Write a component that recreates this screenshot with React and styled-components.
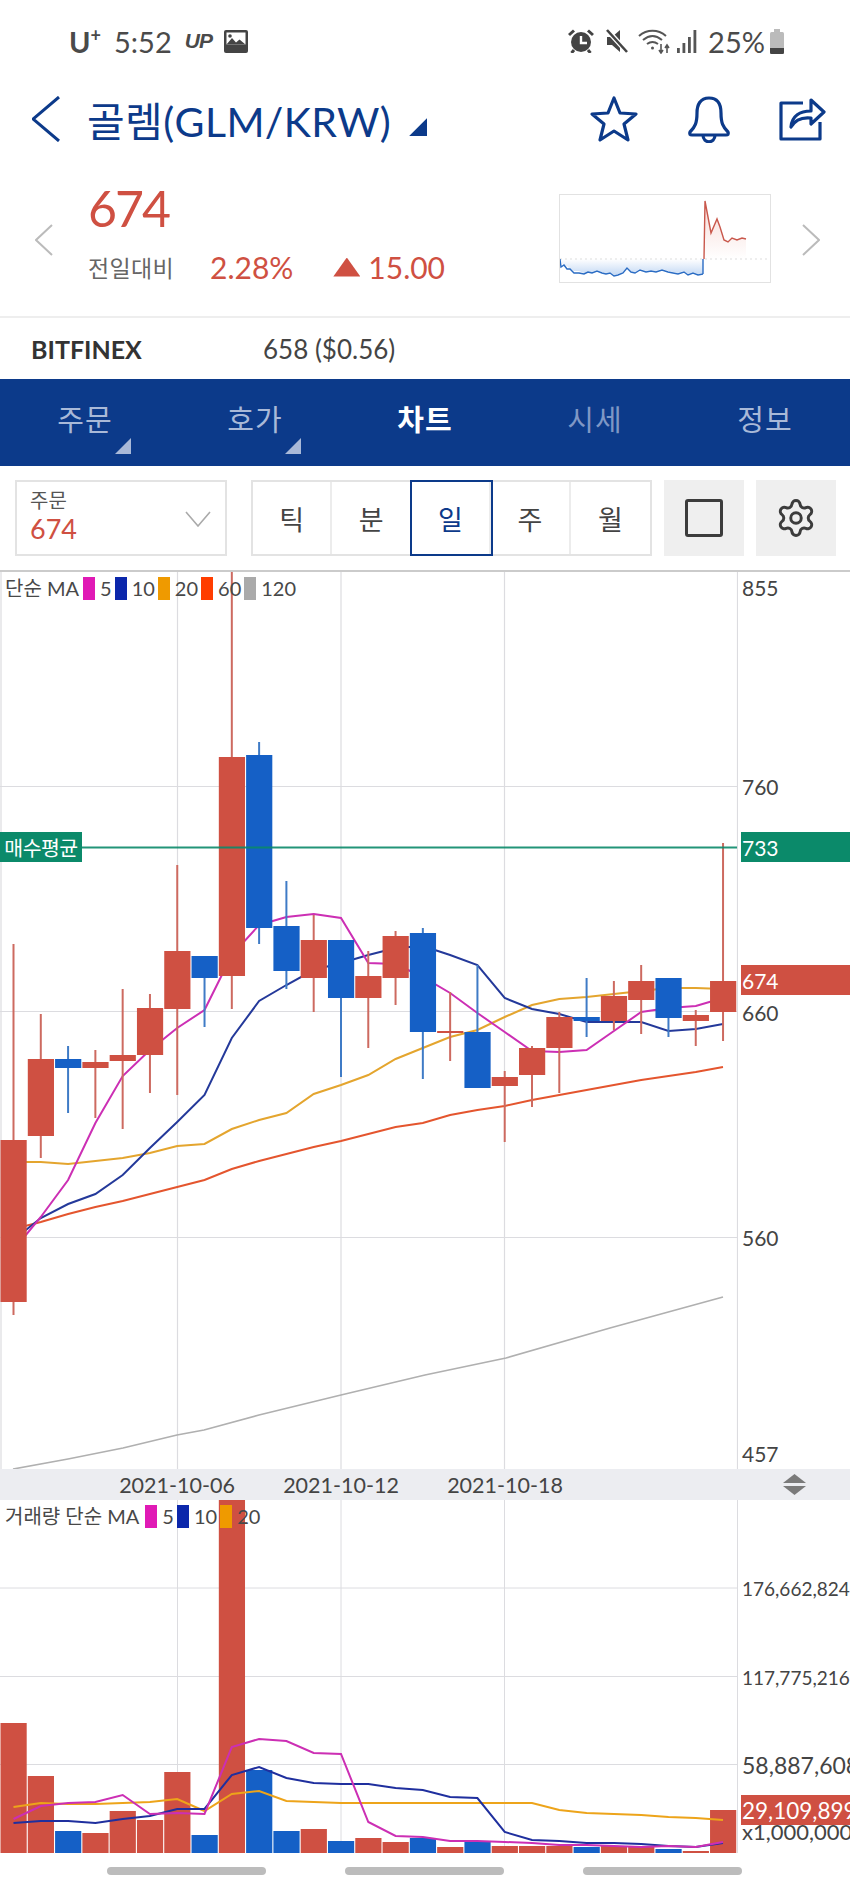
import React from "react";
import styled, { createGlobalStyle } from "styled-components";
import { Settings } from "lucide-react";

const NAVY = "#0c3a8a";
const RED = "#cf5042";
const BLUE = "#1560c6";
const GREEN = "#0b8a6a";
const INK = "#444";
const FONT = `"Lato","Noto Sans CJK KR",sans-serif`;

const Global = createGlobalStyle`
  html, body { margin: 0; padding: 0; background: #fff; }
  body { font-family: ${FONT}; color: ${INK}; }
`;

const Page = styled.div`
  width: 850px; height: 1889px; overflow: hidden; background: #fff;
  display: flex; flex-direction: column;
`;

const StatusBar = styled.div`
  height: 82px; flex: none; display: flex; align-items: center; justify-content: space-between;
  padding: 0 66px 0 69px; color: #4a4a4a; font-size: 29px;
`;
const StatusGroup = styled.div`
  display: flex; align-items: center;
`;
const StatusItem = styled.span`
  display: flex; align-items: center; margin-left: ${p => p.$ml || 0}px;
`;
const Carrier = styled.span` font-size: 29px; font-weight: 700; sup { font-size: 18px; line-height: 0; } `;
const UpMark = styled.span` font: italic 900 21px "Liberation Sans", sans-serif; letter-spacing: -1px; `;

const TitleBar = styled.div`
  height: 74px; flex: none; display: flex; align-items: center; padding: 0 24px 0 32px; color: ${NAVY};
`;
const Title = styled.h1`
  margin: 0 0 0 27px; font-size: 41px; font-weight: 400; white-space: nowrap; letter-spacing: 0.4px;
`;
const Caret = styled.i`
  width: 18px; height: 18px; margin: 16px 0 0 18px; background: ${NAVY};
  clip-path: polygon(100% 0, 100% 100%, 0 100%);
`;
const TitleActions = styled.div`
  margin-left: auto; display: flex; align-items: center; gap: 48px;
`;

const PriceSection = styled.section`
  height: 160px; flex: none; box-sizing: border-box; display: flex; padding: 32px 30px 0 35px;
`;
const PagerSlot = styled.div`
  flex: none; width: 18px; padding-top: 36px; color: #bbb;
`;
const PriceCol = styled.div`
  margin-left: 35px; width: 471px; flex: none; display: flex; flex-direction: column;
`;
const BigPrice = styled.div`
  color: ${RED}; font-size: 50px; line-height: 52px; letter-spacing: -2px; margin-top: -6px;
`;
const ChangeRow = styled.div`
  display: flex; align-items: center; margin-top: 18px; height: 30px; color: ${RED}; font-size: 30px;
`;
const ChangeLabel = styled.span` color: #666; font-size: 23px; width: 122px; letter-spacing: 0.3px; `;
const ChangeArrow = styled.i`
  width: 27px; height: 19px; margin: 0 8px 0 40px; background: ${RED};
  clip-path: polygon(50% 0, 100% 100%, 0 100%);
`;
const Spark = styled.div`
  flex: none; width: 212px; height: 89px; border: 1px solid #e2e2e2; box-sizing: border-box;
  margin-top: 6px; margin-right: 31px;
`;

const ExchangeRow = styled.div`
  height: 63px; flex: none; box-sizing: border-box; border-top: 2px solid #eee; display: flex; align-items: center;
  padding-left: 31px; font-size: 26px; color: #444;
`;
const ExchangeName = styled.span` width: 232px; font-weight: 700; color: #333; font-size: 25px; `;

const TabBar = styled.nav`
  height: 87px; flex: none; background: ${NAVY}; display: grid; grid-template-columns: repeat(5, 170px);
`;
const Tab = styled.div`
  position: relative; display: flex; align-items: center; justify-content: center;
  padding-bottom: 9px; font-size: 29px; letter-spacing: 1px;
  color: ${p => p.$active ? "#fff" : p.$dim ? "#7f97c5" : "#a9b9d8"};
  font-weight: ${p => p.$active ? 700 : 400};
`;
const TabCorner = styled.i`
  position: absolute; right: 39px; bottom: 12px; width: 16px; height: 16px; background: #a9b9d8;
  clip-path: polygon(100% 0, 100% 100%, 0 100%);
`;

const Controls = styled.div`
  height: 104px; flex: none; box-sizing: border-box; padding: 14px 14px 14px 15px;
  display: flex; align-items: flex-start;
`;
const Picker = styled.div`
  box-sizing: border-box; width: 212px; height: 76px; border: 2px solid #e3e3e3;
  padding: 5px 0 0 13px; position: relative; display: flex; flex-direction: column; gap: 2px;
`;
const PickerLabel = styled.span` font-size: 20px; line-height: 26px; color: #555; `;
const PickerValue = styled.span` font-size: 27px; line-height: 28px; color: ${RED}; `;
const PickerChevron = styled.svg` position: absolute; right: 14px; top: 29px; `;
const Segments = styled.div`
  box-sizing: border-box; margin-left: 24px; width: 401px; height: 76px; border: 2px solid #e3e3e3;
  display: grid; grid-template-columns: repeat(5, 1fr);
`;
const Segment = styled.div`
  display: flex; align-items: center; justify-content: center; font-size: 27px;
  border-right: 2px solid #ececec; color: ${p => p.$active ? NAVY : "#444"};
  position: relative;
  &:last-child { border-right: 0; }
  ${p => p.$active ? `box-shadow: 0 0 0 2px ${NAVY}; z-index: 1;` : ""}
`;
const ToolButton = styled.div`
  width: 80px; height: 76px; background: #efefef; margin-left: 12px;
  display: flex; align-items: center; justify-content: center; color: #3c3c3c;
`;
const SquareIcon = styled.i`
  width: 38px; height: 38px; box-sizing: border-box; border: 3px solid #3c3c3c; border-radius: 3px;
`;

const PriceChart = styled.div`
  height: 899px; flex: none; box-sizing: border-box; border-top: 2px solid #cbcbcb;
  display: grid; grid-template-columns: 738px 112px; position: relative;
`;
const VolumeChart = styled.div`
  height: 353px; flex: none; display: grid; grid-template-columns: 738px 112px; position: relative;
`;
const Plot = styled.svg` display: block; `;
const Axis = styled.div` position: relative; overflow: hidden; `;
const AxisLabel = styled.span`
  position: absolute; left: 4px; top: ${p => p.$y}px; transform: translateY(-50%);
  font-size: ${p => p.$size || 21}px; line-height: 1; color: #444; white-space: nowrap;
`;
const AxisTag = styled.span`
  position: absolute; left: 3px; right: 0; top: ${p => p.$y}px; height: ${p => p.$h || 30}px;
  background: ${p => p.$bg}; color: #fff; font-size: ${p => p.$size || 21}px;
  display: flex; align-items: center; padding-left: 1px; white-space: nowrap; overflow: hidden;
`;
const Legend = styled.div`
  position: absolute; left: 5px; top: ${p => p.$top}px; display: flex; align-items: center; gap: 3px;
  font-size: 20px; line-height: 23px; color: #484848; white-space: nowrap;
`;
const LegendName = styled.span` margin-right: ${p => p.$mr || 1}px; `;
const Swatch = styled.i`
  width: 12px; height: 23px; background: ${p => p.$color}; margin-right: 2px;
`;
const AvgTag = styled.div`
  position: absolute; left: 0; top: 260px; width: 82px; height: 30px; background: ${GREEN};
  color: #fff; font-size: 20.5px; display: flex; align-items: center; justify-content: center;
  white-space: nowrap; letter-spacing: -0.5px;
`;

const DateBar = styled.div`
  height: 31px; flex: none; background: #ecedf1; position: relative; font-size: 21.5px; color: #444;
`;
const DateLabel = styled.span`
  position: absolute; left: ${p => p.$x}px; top: 50%; transform: translate(-50%, -50%); white-space: nowrap;
`;
const Resizer = styled.svg` position: absolute; left: 783px; top: 5px; `;

const GestureBar = styled.div`
  flex: 1; display: flex; align-items: flex-start; padding: 14px 0 0 107px; gap: 79px;
`;
const Pill = styled.i` width: 159px; height: 8px; border-radius: 4px; background: #bcbcbc; `;

const X = i => 13.5 + 27.29 * i;
const pts = ys => ys.map((y, i) => `${X(i).toFixed(1)},${y}`).join(" ");

// kind, wick top, body top, body bottom, wick bottom
const CANDLES = [
  ["r", 944, 1140, 1302, 1315], ["r", 1014, 1059, 1136, 1158], ["b", 1046, 1059, 1068, 1113],
  ["r", 1050, 1062, 1068, 1118], ["r", 989, 1055, 1061, 1129], ["r", 994, 1008, 1055, 1093],
  ["r", 865, 951, 1009, 1095], ["b", 956, 956, 978, 1027], ["r", 572, 757, 976, 1009],
  ["b", 742, 755, 928, 944], ["b", 881, 926, 971, 989], ["r", 915, 940, 978, 1012],
  ["b", 940, 940, 998, 1077], ["r", 951, 976, 998, 1048], ["r", 931, 936, 978, 1005],
  ["b", 928, 933, 1032, 1079], ["r", 992, 1031, 1033, 1061], ["b", 965, 1032, 1088, 1088],
  ["r", 1071, 1077, 1086, 1142], ["r", 1046, 1048, 1075, 1107], ["r", 1012, 1017, 1048, 1093],
  ["b", 978, 1017, 1021, 1037], ["r", 981, 996, 1021, 1030], ["r", 965, 981, 1000, 1034],
  ["b", 978, 978, 1018, 1037], ["r", 1010, 1015, 1021, 1046], ["r", 843, 981, 1012, 1041],
];

const MA5 = [1250,1217,1180,1123,1076,1050,1028,1010,955,925,917,914,918,963,964,977,993,1013,1032,1051,1052,1050,1031,1012,1008,1006,998];
const MA10 = [1240,1218,1204,1194,1175,1148,1122,1095,1038,1001,985,970,963,955,948,946,955,965,998,1009,1014,1022,1022,1022,1031,1029,1024];
const MA20 = [1162,1162,1164,1161,1158,1153,1146,1144,1129,1120,1113,1094,1085,1075,1059,1048,1037,1030,1017,1005,999,997,994,991,988,988,989];
const MA60 = [1229,1222,1214,1207,1201,1194,1187,1180,1169,1161,1154,1147,1141,1134,1127,1123,1115,1110,1106,1100,1095,1090,1085,1080,1076,1072,1067];
const MA120 = "13,1469 68,1459 123,1448 177,1435 204,1430 259,1415 341,1395 425,1375 506,1358 610,1328 723,1297";

const VOL = [
  ["r",1723],["r",1776],["b",1831],["r",1833],["r",1811],["r",1820],["r",1772],["b",1835],["r",1500],
  ["b",1770],["b",1831],["r",1829],["b",1841],["r",1838],["r",1842],["b",1838],["r",1847],["b",1842],
  ["r",1846],["r",1846],["r",1846],["b",1847],["r",1846],["r",1846],["b",1849],["r",1851],["r",1810],
];
const V5 = [1819,1806,1803,1802,1795,1814,1813,1814,1747,1739,1741,1753,1754,1822,1836,1837,1841,1841,1842,1843,1845,1845,1846,1847,1846,1847,1842];
const V10 = [1823,1821,1821,1823,1819,1816,1809,1809,1775,1767,1778,1783,1784,1784,1788,1790,1797,1798,1832,1840,1841,1843,1843,1844,1846,1847,1843];
const V20 = [1807,1803,1804,1804,1803,1802,1799,1811,1794,1791,1801,1802,1803,1803,1803,1803,1803,1803,1803,1803,1810,1813,1814,1815,1817,1818,1820];

const GRID = "#dcdce0";

const Candle = ({ c, i }) => {
  const [k, wt, bt, bb, wb] = c;
  const x = X(i);
  return (
    <g>
      <line x1={x} x2={x} y1={wt} y2={wb} stroke={k === "r" ? "#cd6a60" : "#3f7bc6"} strokeWidth="2" />
      <rect x={x - 13} y={bt} width="26.2" height={bb - bt} fill={k === "r" ? RED : BLUE} />
    </g>
  );
};

const PricePlot = () => (
  <Plot width="738" height="897" viewBox="0 572 738 897">
    <g stroke={GRID} strokeWidth="1.2">
      <line x1="1" x2="1" y1="572" y2="1469" />
      <line x1="0" x2="737" y1="786.5" y2="786.5" />
      <line x1="0" x2="737" y1="1011.5" y2="1011.5" />
      <line x1="0" x2="737" y1="1237.5" y2="1237.5" />
      <line x1="177.5" x2="177.5" y1="572" y2="1469" />
      <line x1="341" x2="341" y1="572" y2="1469" />
      <line x1="504.5" x2="504.5" y1="572" y2="1469" />
      <line x1="737.5" x2="737.5" y1="572" y2="1469" />
    </g>
    <polyline points={MA120} fill="none" stroke="#b0b0b0" strokeWidth="1.7" />
    <polyline points={pts(MA60)} fill="none" stroke="#e4552e" strokeWidth="2" />
    <polyline points={pts(MA20)} fill="none" stroke="#e4a52e" strokeWidth="2" />
    <polyline points={pts(MA10)} fill="none" stroke="#24399a" strokeWidth="2" />
    <polyline points={pts(MA5)} fill="none" stroke="#cc2fb4" strokeWidth="2" />
    {CANDLES.map((c, i) => <Candle key={i} c={c} i={i} />)}
    <line x1="0" x2="737" y1="847.5" y2="847.5" stroke={GREEN} strokeWidth="1.8" opacity="0.9" />
  </Plot>
);

const VolumePlot = () => (
  <Plot width="738" height="353" viewBox="0 1500 738 353">
    <g stroke={GRID} strokeWidth="1">
      <line x1="0" x2="737" y1="1588" y2="1588" />
      <line x1="0" x2="737" y1="1676.5" y2="1676.5" />
      <line x1="0" x2="737" y1="1764.5" y2="1764.5" />
      <line x1="177.5" x2="177.5" y1="1500" y2="1853" />
      <line x1="341" x2="341" y1="1500" y2="1853" />
      <line x1="504.5" x2="504.5" y1="1500" y2="1853" />
      <line x1="737.5" x2="737.5" y1="1500" y2="1853" />
    </g>
    {VOL.map(([k, top], i) => (
      <rect key={i} x={X(i) - 13} y={top} width="26.2" height={1853 - top} fill={k === "r" ? RED : BLUE} />
    ))}
    <polyline points={pts(V20)} fill="none" stroke="#eda41a" strokeWidth="2" />
    <polyline points={pts(V10)} fill="none" stroke="#1f2f9e" strokeWidth="2" />
    <polyline points={pts(V5)} fill="none" stroke="#cc2fb4" strokeWidth="2" />
  </Plot>
);

const Sparkline = () => (
  <svg width="210" height="87" viewBox="0 0 210 87">
    <defs>
      <linearGradient id="sb" x1="0" x2="0" y1="0" y2="1">
        <stop offset="0" stopColor="#fff" /><stop offset="1" stopColor="#c4d9f4" />
      </linearGradient>
      <linearGradient id="sr" x1="0" x2="0" y1="0" y2="1">
        <stop offset="0" stopColor="#f7d9d5" /><stop offset="1" stopColor="#fff" />
      </linearGradient>
    </defs>
    <polygon points="0,64 143,64 143,78 138,79 133,77 128,79 124,76 118,78 113,77 108,76 102,74 96,76 91,75 86,76 80,74 75,77 71,76 67,72 63,77 58,79 54,80 50,77 46,78 42,77 37,75 32,77 28,78 24,78 19,76 14,76 10,74 7,71 4,72 1,66" fill="url(#sb)" />
    <polygon points="144,64 145,6 151,38 157,24 160,32 164,45 168,47 172,43 177,45 182,43 186,43 186,64" fill="url(#sr)" />
    <line x1="0" x2="210" y1="64" y2="64" stroke="#ddd" strokeDasharray="2 3" />
    <polyline points="0,64 1,72 4,70 7,74 10,74 14,78 19,78 24,79 28,77 32,78 37,76 42,78 46,79 50,78 54,81 58,80 63,78 67,73 71,77 75,78 80,75 86,77 91,76 96,77 102,75 108,77 113,78 118,79 124,77 128,80 133,78 138,80 143,79" fill="none" stroke="#2a6cc4" strokeWidth="1.4" />
    <line x1="143" x2="143" y1="64" y2="79" stroke="#2a6cc4" strokeWidth="1.4" />
    <polyline points="144,64 145,6 151,38 157,24 160,32 164,45 168,47 172,43 177,45 182,43 186,44" fill="none" stroke="#c9584c" strokeWidth="1.4" />
  </svg>
);

const Chevron = ({ dir = "left", w = 18, h = 32, color = "#bbb", sw = 2 }) => (
  <svg width={w} height={h} viewBox={`0 0 ${w} ${h}`} fill="none" stroke={color} strokeWidth={sw}>
    <polyline points={dir === "left" ? `${w - 1},1 1,${h / 2} ${w - 1},${h - 1}` : `1,1 ${w - 1},${h / 2} 1,${h - 1}`} />
  </svg>
);

const StarIcon = () => (
  <svg width="50" height="48" viewBox="0 0 50 48" fill="none" stroke={NAVY} strokeWidth="3.2" strokeLinejoin="round">
    <path d="M25 3 L31 18 L47 19 L35 29 L39 45 L25 36 L11 45 L15 29 L3 19 L19 18 Z" />
  </svg>
);
const BellIcon = () => (
  <svg width="44" height="47" viewBox="0 0 44 47" fill="none" stroke={NAVY} strokeWidth="3.2" strokeLinejoin="round">
    <path d="M22 2 C31 2 34 9 34 17 C34 27 36 31 41 36 C42 38 41 39 39 39 L5 39 C3 39 2 38 3 36 C8 31 10 27 10 17 C10 9 13 2 22 2 Z" />
    <path d="M16 39 C16 48 28 48 28 39" />
  </svg>
);
const ShareIcon = () => (
  <svg width="47" height="44" viewBox="0 0 47 44" fill="none" stroke={NAVY} strokeWidth="3.2" strokeLinejoin="round">
    <path d="M24 6 H2 V42 H41 V25" />
    <path d="M12 30 C13 19 21 14 32 14 V3 L45 15 L32 27 V21 C23 20 16 23 12 30 Z" />
  </svg>
);

const ImageIcon = () => (
  <svg width="24" height="23" viewBox="0 0 24 23">
    <rect width="24" height="23" rx="2" fill="#444" />
    <rect x="2.5" y="2.5" width="19" height="12" fill="#fff" />
    <path d="M2.5 14.5 L8 8 L12 12.5 L15.5 9.5 L21.5 14.5 Z" fill="#444" />
    <circle cx="6" cy="6" r="1.8" fill="#444" />
  </svg>
);
const AlarmIcon = () => (
  <svg width="26" height="24" viewBox="0 0 26 24">
    <circle cx="13" cy="13" r="10" fill="#444" />
    <path d="M13 7 V14 H19" stroke="#fff" strokeWidth="2.4" fill="none" />
    <path d="M1 6 L6 1.5 M25 6 L20 1.5 M6 21 L3.5 24 M20 21 L22.5 24" stroke="#444" strokeWidth="3" />
  </svg>
);
const MuteIcon = () => (
  <svg width="22" height="24" viewBox="0 0 22 24">
    <path d="M1 8 H6 L14 1 V23 L6 16 H1 Z" fill="#444" />
    <path d="M2 2 L22 24" stroke="#fff" strokeWidth="5" />
    <path d="M1 1 L21 23" stroke="#444" strokeWidth="2.6" />
  </svg>
);
const WifiIcon = () => (
  <svg width="32" height="25" viewBox="0 0 32 25" fill="none" stroke="#555" strokeWidth="2">
    <path d="M1 7 C9 0 20 0 28 7" />
    <path d="M5 11 C11 6 18 6 24 11" />
    <path d="M9 15 C13 12 16 12 20 15" />
    <circle cx="14.5" cy="19" r="1.5" fill="#555" stroke="none" />
    <path d="M23 15 V24 M21 21 L23 24 L25 21 M29 24 V16 M27 19 L29 16 L31 19" strokeWidth="1.6" />
  </svg>
);
const SignalIcon = () => (
  <svg width="20" height="24" viewBox="0 0 20 24" fill="#555">
    <rect x="0" y="19" width="2.8" height="5" /><rect x="5.5" y="14" width="2.8" height="10" />
    <rect x="11" y="8" width="2.8" height="16" /><rect x="16.5" y="1" width="2.8" height="23" />
  </svg>
);
const BatteryIcon = () => (
  <svg width="14" height="25" viewBox="0 0 14 25">
    <rect x="4" y="0" width="6" height="3" fill="#bbb" />
    <rect x="0" y="3" width="14" height="22" rx="1.5" fill="#bbb" />
    <path d="M0 19 H14 V23.5 A1.5 1.5 0 0 1 12.5 25 H1.5 A1.5 1.5 0 0 1 0 23.5 Z" fill="#444" />
  </svg>
);

const LEGEND = [["#e01ab5", "5"], ["#0b27ab", "10"], ["#ef9a00", "20"], ["#ff3d00", "60"], ["#aaa", "120"]];

export default function App() {
  return (
    <Page>
      <Global />
      <StatusBar>
        <StatusGroup>
          <Carrier>U<sup>+</sup></Carrier>
          <StatusItem $ml={13}>5:52</StatusItem>
          <StatusItem $ml={13}><UpMark>UP</UpMark></StatusItem>
          <StatusItem $ml={12}><ImageIcon /></StatusItem>
        </StatusGroup>
        <StatusGroup>
          <AlarmIcon />
          <StatusItem $ml={12}><MuteIcon /></StatusItem>
          <StatusItem $ml={10}><WifiIcon /></StatusItem>
          <StatusItem $ml={7}><SignalIcon /></StatusItem>
          <StatusItem $ml={11}>25%</StatusItem>
          <StatusItem $ml={5}><BatteryIcon /></StatusItem>
        </StatusGroup>
      </StatusBar>

      <TitleBar>
        <Chevron w={28} h={46} color={NAVY} sw={3} />
        <Title>골렘(GLM/KRW)</Title>
        <Caret />
        <TitleActions>
          <StarIcon />
          <BellIcon />
          <ShareIcon />
        </TitleActions>
      </TitleBar>

      <PriceSection>
        <PagerSlot><Chevron /></PagerSlot>
        <PriceCol>
          <BigPrice>674</BigPrice>
          <ChangeRow>
            <ChangeLabel>전일대비</ChangeLabel>
            <span>2.28%</span>
            <ChangeArrow />
            <span>15.00</span>
          </ChangeRow>
        </PriceCol>
        <Spark><Sparkline /></Spark>
        <PagerSlot><Chevron dir="right" /></PagerSlot>
      </PriceSection>

      <ExchangeRow>
        <ExchangeName>BITFINEX</ExchangeName>
        <span>658 ($0.56)</span>
      </ExchangeRow>

      <TabBar>
        <Tab>주문<TabCorner /></Tab>
        <Tab>호가<TabCorner /></Tab>
        <Tab $active>차트</Tab>
        <Tab $dim>시세</Tab>
        <Tab>정보</Tab>
      </TabBar>

      <Controls>
        <Picker>
          <PickerLabel>주문</PickerLabel>
          <PickerValue>674</PickerValue>
          <PickerChevron width="26" height="16" viewBox="0 0 26 16" fill="none" stroke="#aaa" strokeWidth="1.6">
            <polyline points="1,1 13,15 25,1" />
          </PickerChevron>
        </Picker>
        <Segments>
          <Segment>틱</Segment>
          <Segment>분</Segment>
          <Segment $active>일</Segment>
          <Segment>주</Segment>
          <Segment>월</Segment>
        </Segments>
        <ToolButton><SquareIcon /></ToolButton>
        <ToolButton><Settings size={42} strokeWidth={1.7} /></ToolButton>
      </Controls>

      <PriceChart>
        <PricePlot />
        <Axis>
          <AxisLabel $y={15}>855</AxisLabel>
          <AxisLabel $y={214}>760</AxisLabel>
          <AxisTag $y={260} $bg={GREEN}>733</AxisTag>
          <AxisTag $y={393} $bg={RED}>674</AxisTag>
          <AxisLabel $y={440}>660</AxisLabel>
          <AxisLabel $y={665}>560</AxisLabel>
          <AxisLabel $y={881}>457</AxisLabel>
        </Axis>
        <Legend $top={5}>
          <LegendName>단순 MA</LegendName>
          {LEGEND.map(([c, n]) => (
            <React.Fragment key={n}>
              <Swatch $color={c} />
              <span>{n}</span>
            </React.Fragment>
          ))}
        </Legend>
        <AvgTag>매수평균</AvgTag>
      </PriceChart>

      <DateBar>
        <DateLabel $x={177}>2021-10-06</DateLabel>
        <DateLabel $x={341}>2021-10-12</DateLabel>
        <DateLabel $x={505}>2021-10-18</DateLabel>
        <Resizer width="23" height="21" viewBox="0 0 23 21" fill="#7a7a7a">
          <polygon points="11.5,0 23,9 0,9" />
          <polygon points="0,12 23,12 11.5,21" />
        </Resizer>
      </DateBar>

      <VolumeChart>
        <VolumePlot />
        <Axis>
          <AxisLabel $y={88} $size={19}>176,662,824</AxisLabel>
          <AxisLabel $y={177} $size={19}>117,775,216</AxisLabel>
          <AxisLabel $y={265} $size={23}>58,887,608</AxisLabel>
          <AxisTag $y={295} $bg={RED} $size={22.5}>29,109,899</AxisTag>
          <AxisLabel $y={332} $size={22}>x1,000,000</AxisLabel>
        </Axis>
        <Legend $top={5}>
          <LegendName $mr={3}>거래량 단순 MA</LegendName>
          {LEGEND.slice(0, 3).map(([c, n]) => (
            <React.Fragment key={n}>
              <Swatch $color={c} />
              <span>{n}</span>
            </React.Fragment>
          ))}
        </Legend>
      </VolumeChart>

      <GestureBar>
        <Pill /><Pill /><Pill />
      </GestureBar>
    </Page>
  );
}
